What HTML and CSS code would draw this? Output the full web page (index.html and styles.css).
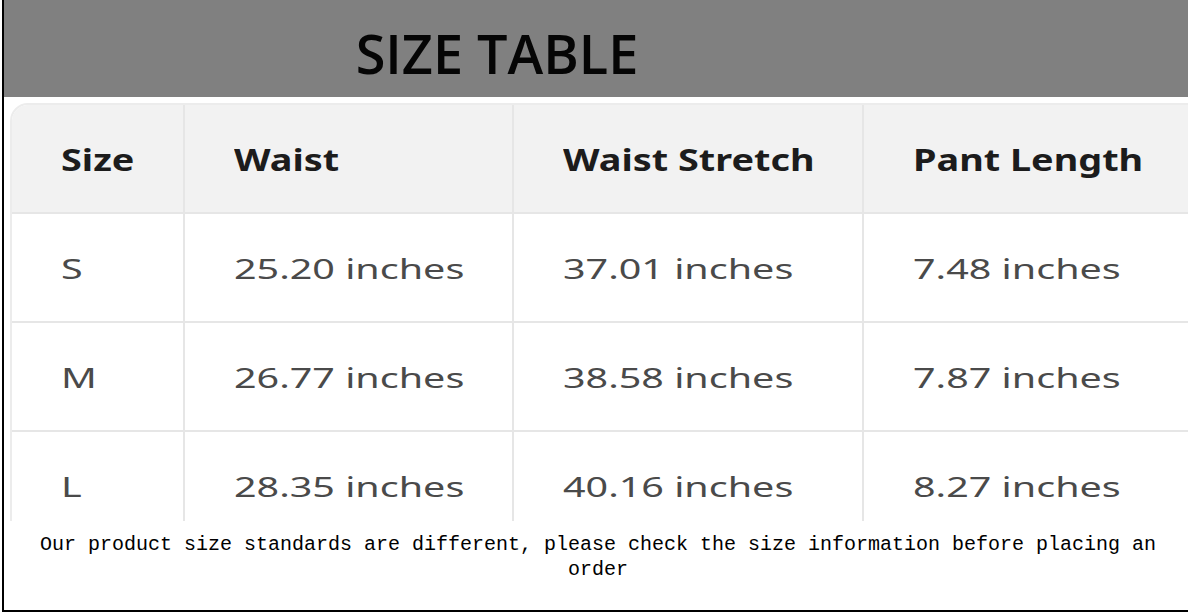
FILE: index.html
```html
<!DOCTYPE html>
<html lang="en">
<head>
<meta charset="utf-8">
<title>Size Table</title>
<link rel="stylesheet" href="styles.css">
</head>
<body>
<div class="frame">
  <header class="banner">
    <h1 class="title">SIZE TABLE</h1>
  </header>
  <div class="table-wrap">
    <table class="sizes">
      <colgroup>
        <col class="c1"><col class="c2"><col class="c3"><col class="c4">
      </colgroup>
      <thead>
        <tr>
          <th><span class="txt">Size</span></th>
          <th><span class="txt">Waist</span></th>
          <th><span class="txt">Waist Stretch</span></th>
          <th><span class="txt">Pant Length</span></th>
        </tr>
      </thead>
      <tbody>
        <tr>
          <td><span class="txt">S</span></td>
          <td><span class="txt">25.20 inches</span></td>
          <td><span class="txt">37.01 inches</span></td>
          <td><span class="txt">7.48 inches</span></td>
        </tr>
        <tr>
          <td><span class="txt">M</span></td>
          <td><span class="txt">26.77 inches</span></td>
          <td><span class="txt">38.58 inches</span></td>
          <td><span class="txt">7.87 inches</span></td>
        </tr>
        <tr>
          <td><span class="txt">L</span></td>
          <td><span class="txt">28.35 inches</span></td>
          <td><span class="txt">40.16 inches</span></td>
          <td><span class="txt">8.27 inches</span></td>
        </tr>
      </tbody>
    </table>
  </div>
  <p class="note">Our product size standards are different, please check the size information before placing an order</p>
</div>
</body>
</html>
```

FILE: styles.css
```css
html, body {
  margin: 0;
  padding: 0;
  background: #ffffff;
}

.frame {
  width: 1184px;
  height: 610px;
  margin-left: 2px;
  border-left: 2px solid #000;
  border-bottom: 2px solid #000;
  overflow: hidden;
  display: flex;
  flex-direction: column;
}

.banner {
  height: 97px;
  background: #808080;
  display: flex;
  align-items: center;
  justify-content: center;
  flex: none;
}

.title {
  margin: 0;
  font-family: "Open Sans", "Noto Sans", sans-serif;
  font-weight: 600;
  font-size: 54px;
  color: #050505;
  line-height: 1;
  transform: translate(-99px, 4px);
}

.table-wrap {
  margin: 6px 0 0 6px;
  height: 418px;
  overflow: hidden;
  flex: none;
}

.sizes {
  width: 1190px;
  border-collapse: separate;
  border-spacing: 0;
  table-layout: fixed;
  border: 2px solid #ececec;
  border-radius: 18px;
  overflow: hidden;
  font-family: "Noto Sans", "Open Sans", sans-serif;
}

.c1 { width: 173px; }
.c2 { width: 329px; }
.c3 { width: 350px; }
.c4 { width: 338px; }

.sizes th,
.sizes td {
  height: 107px;
  padding: 0 0 0 49px;
  text-align: left;
  vertical-align: middle;
  border-right: 2px solid #e6e6e6;
  border-bottom: 2px solid #e6e6e6;
  white-space: nowrap;
}

.sizes th:last-child,
.sizes td:last-child {
  border-right: none;
}

.sizes thead th {
  background: #f2f2f2;
  font-size: 31px;
  font-weight: 700;
  color: #1c1c1c;
}

.sizes tbody td {
  background: #fff;
  font-size: 28px;
  font-weight: 400;
  color: #4a4a4a;
}

.txt {
  display: inline-block;
  transform-origin: left center;
}

.sizes thead .txt { transform: scaleX(1.22); }
.sizes tbody .txt { transform: scaleX(1.41); }

.note {
  margin: 11px 0 0 0;
  padding: 0 27px 0 31px;
  font-family: "Liberation Mono", "DejaVu Sans Mono", monospace;
  font-size: 20px;
  line-height: 25px;
  color: #000;
  text-align: center;
}
```
